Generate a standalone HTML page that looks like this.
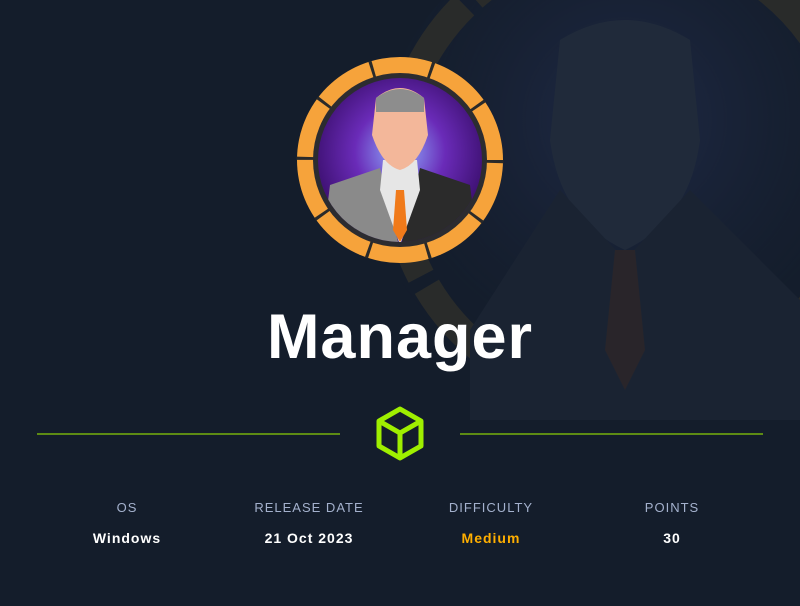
<!DOCTYPE html><html><head><style>
body{margin:0;width:800px;height:606px;background:#141d2b;overflow:hidden;position:relative;font-family:"Liberation Sans",sans-serif}
.t{position:absolute;text-align:center;width:160px}
.l{color:#a4b1cd;font-size:13px;letter-spacing:1px;top:500px}
.v{color:#fff;font-size:14px;font-weight:bold;letter-spacing:1px;top:530px}
</style></head><body>
<svg width="800" height="606" style="position:absolute;left:0;top:0">
<defs><radialGradient id="bg" cx="0.5" cy="0.4" r="0.6"><stop offset="0" stop-color="#3a4a8a"/><stop offset="1" stop-color="#141d2b" stop-opacity="0"/></radialGradient>
<radialGradient id="pg" cx="0.5" cy="0.45" r="0.55"><stop offset="0" stop-color="#8fb0ff"/><stop offset="0.5" stop-color="#6a2bb8"/><stop offset="1" stop-color="#3b0f6e"/></radialGradient></defs>
<g opacity="0.3">
<circle cx="625" cy="170" r="250" fill="url(#bg)"/>
<circle cx="625" cy="170" r="230" fill="none" stroke="#5a4c2a" stroke-width="28" stroke-dasharray="90 12"/>
<path d="M560 40 Q625 0 690 40 L700 140 Q690 220 625 250 Q560 220 550 140Z" fill="#3d4a5e"/>
<path d="M470 330 L560 190 L625 260 L690 190 L800 300 L800 420 L470 420Z" fill="#2a3345"/>
<path d="M615 250 L635 250 L645 350 L625 390 L605 350Z" fill="#5a3a2a"/>
</g>
<circle cx="400" cy="160" r="103" fill="#f6a33b"/>
<circle cx="400" cy="160" r="95" fill="none" stroke="#2a2a2a" stroke-width="17" stroke-dasharray="3 56.7"/>
<circle cx="400" cy="160" r="87" fill="#2c2c30"/>
<circle cx="400" cy="160" r="82" fill="url(#pg)"/>
<clipPath id="c"><circle cx="400" cy="160" r="82"/></clipPath>
<g clip-path="url(#c)">
<path d="M330 185 L380 168 L400 250 L322 250Z" fill="#8a8a8a"/>
<path d="M470 185 L420 168 L400 250 L478 250Z" fill="#2b2b2b"/>
<path d="M383 160 L417 160 L420 190 L400 245 L380 190Z" fill="#e6e6e6"/>
<path d="M396 190 L404 190 L407 230 L400 242 L393 230Z" fill="#f07a1a"/>
<path d="M376 98 Q400 78 424 98 L428 135 Q418 165 400 170 Q382 165 372 135Z" fill="#f3b79a"/>
<path d="M376 98 Q400 80 424 98 L424 112 L376 112Z" fill="#8d8d8d"/>
</g>
<line x1="37" y1="434" x2="340" y2="434" stroke="#9fef00" stroke-opacity="0.7" stroke-width="1.5"/>
<line x1="460" y1="434" x2="763" y2="434" stroke="#9fef00" stroke-opacity="0.7" stroke-width="1.5"/>
<g fill="none" stroke="#9fef00" stroke-width="5" stroke-linejoin="round">
<path d="M400 409 L421 421 L421 446 L400 458 L379 446 L379 421Z"/>
<path d="M379 421 L400 433 L421 421 M400 433 L400 458"/>
</g>
</svg>
<div style="position:absolute;top:301px;left:0;width:800px;text-align:center;color:#fff;font-size:63px;font-weight:bold;letter-spacing:1px">Manager</div>
<div class="t l" style="left:47px">OS</div><div class="t l" style="left:229px">RELEASE DATE</div><div class="t l" style="left:411px">DIFFICULTY</div><div class="t l" style="left:592px">POINTS</div>
<div class="t v" style="left:47px">Windows</div><div class="t v" style="left:229px">21 Oct 2023</div><div class="t v" style="left:411px;color:#ffaf00">Medium</div><div class="t v" style="left:592px">30</div>
</body></html>
